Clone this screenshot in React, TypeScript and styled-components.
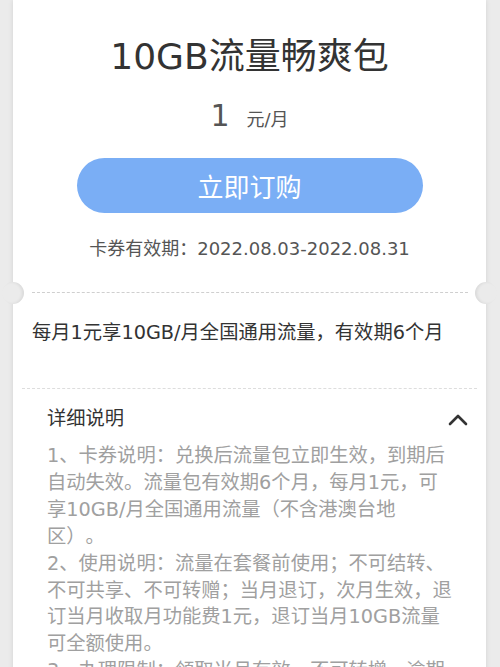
import React from "react";
import styled, { createGlobalStyle } from "styled-components";

const GlobalStyle = createGlobalStyle`
  html, body {
    margin: 0;
    padding: 0;
    background: #ebebeb;
  }
  body {
    font-family: "DejaVu Sans", "Noto Sans CJK SC", sans-serif;
    text-spacing-trim: space-all;
    overflow: hidden;
  }
`;

const Card = styled.div`
  margin: 0 14px 0 13px;
  background: #ffffff;
  box-shadow: 0 0 5px rgba(0, 0, 0, 0.1);
  min-height: 700px;
`;

const Top = styled.section`
  display: flex;
  flex-direction: column;
  align-items: center;
  padding: 34px 0 30px;
`;

const Title = styled.h1`
  margin: 0;
  font-size: 36px;
  line-height: 45px;
  font-weight: 400;
  color: #333333;
`;

const PriceRow = styled.div`
  margin-top: 17px;
  font-size: 30px;
  line-height: 40px;
  height: 40px;
  color: #555555;
`;

const Unit = styled.span`
  font-size: 18px;
  line-height: 20px;
  margin-left: 17px;
`;

const BuyButton = styled.button`
  margin-top: 22px;
  width: 346px;
  height: 55px;
  border: none;
  border-radius: 28px;
  background: #7aaef5;
  color: #ffffff;
  font-family: inherit;
  font-size: 26px;
  display: flex;
  align-items: center;
  justify-content: center;
  padding: 0;
`;

const Validity = styled.div`
  margin-top: 23px;
  font-size: 18px;
  line-height: 26px;
  color: #555555;
`;

const Divider = styled.div<{ $inset: string; $color: string }>`
  position: relative;
  height: 0;
  margin: 0 ${(p) => p.$inset};
  border-top: 1px dashed ${(p) => p.$color};
`;

const Notch = styled.span<{ $side: "left" | "right" }>`
  position: absolute;
  top: -11px;
  ${(p) => (p.$side === "left" ? "left: -30px;" : "right: -29px;")}
  width: 22px;
  height: 22px;
  border-radius: 50%;
  background: #ebebeb;
  box-shadow: inset ${(p) => (p.$side === "left" ? "-2px" : "2px")} 0 3px rgba(0, 0, 0, 0.07);
`;

const Summary = styled.p`
  margin: 0;
  padding: 26px 19px 41px;
  font-size: 19.3px;
  line-height: 28px;
  color: #333333;
`;

const DetailHeader = styled.div`
  display: flex;
  align-items: center;
  justify-content: space-between;
  padding: 16px 18px 0 34px;
  font-size: 19.3px;
  line-height: 28px;
  color: #333333;
`;

const DetailBody = styled.div`
  padding: 10px 33px 0 34px;
  font-size: 19.3px;
  line-height: 26.9px;
  color: #a0a0a0;
  text-spacing-trim: space-all;
`;

const Item = styled.p`
  margin: 0;
`;

const Chevron = () => (
  <svg width="20" height="13" viewBox="0 0 20 13" fill="none">
    <polyline
      points="2,11 10,3 18,11"
      stroke="#333333"
      strokeWidth="2.6"
      strokeLinecap="round"
      strokeLinejoin="round"
    />
  </svg>
);

export default function App() {
  return (
    <>
      <GlobalStyle />
      <Card>
        <Top>
          <Title>10GB流量畅爽包</Title>
          <PriceRow>
            1<Unit>元/月</Unit>
          </PriceRow>
          <BuyButton>立即订购</BuyButton>
          <Validity>卡券有效期：2022.08.03-2022.08.31</Validity>
        </Top>
        <Divider $inset="18px 0 19px" $color="#cfcfcf">
          <Notch $side="left" />
          <Notch $side="right" />
        </Divider>
        <Summary>每月1元享10GB/月全国通用流量，有效期6个月</Summary>
        <Divider $inset="9px" $color="#dddddd" />
        <DetailHeader>
          <span>详细说明</span>
          <Chevron />
        </DetailHeader>
        <DetailBody>
          <Item>
            1、卡券说明：兑换后流量包立即生效，到期后自动失效。流量包有效期6个月，每月1元，可享10GB/月全国通用流量（不含港澳台地区）。
          </Item>
          <Item>
            2、使用说明：流量在套餐前使用；不可结转、不可共享、不可转赠；当月退订，次月生效，退订当月收取月功能费1元，退订当月10GB流量可全额使用。
          </Item>
          <Item>
            3、办理限制：领取当月有效，不可转增，逾期作废。
          </Item>
        </DetailBody>
      </Card>
    </>
  );
}
